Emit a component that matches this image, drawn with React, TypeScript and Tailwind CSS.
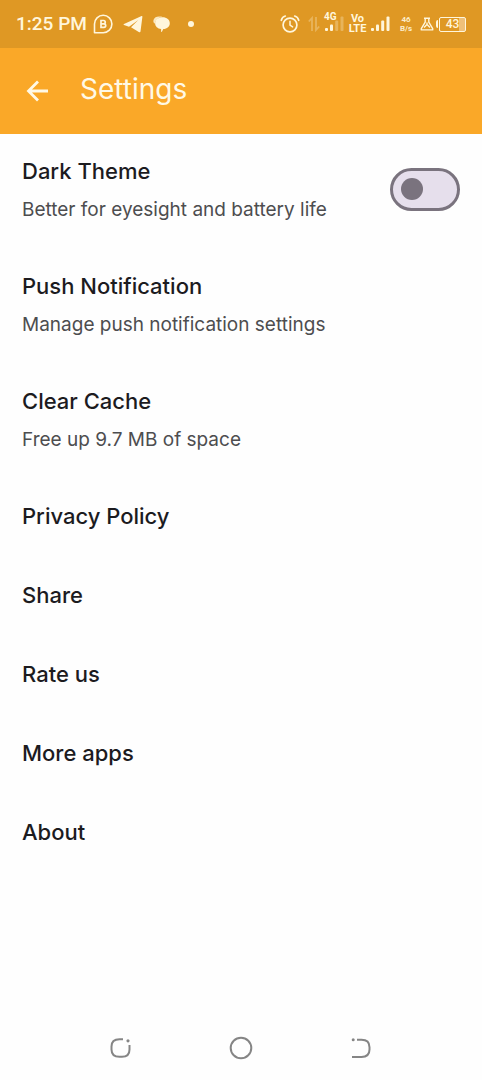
import React, { useState } from "react";
import clsx from "clsx";

type SettingProps = {
  title: string;
  subtitle?: string;
};

const settings: SettingProps[] = [
  { title: "Push Notification", subtitle: "Manage push notification settings" },
  { title: "Clear Cache", subtitle: "Free up 9.7 MB of space" },
  { title: "Privacy Policy" },
  { title: "Share" },
  { title: "Rate us" },
  { title: "More apps" },
  { title: "About" },
];

const SettingText: React.FC<SettingProps> = ({ title, subtitle }) => (
  <>
    <span className="block text-[22px] leading-[34px] font-medium text-[#1c1b1f]">
      {title}
    </span>
    {subtitle && (
      <span className="mt-2 block text-[19px] leading-7 text-[#4d4d4f]">
        {subtitle}
      </span>
    )}
  </>
);

const SignalBars: React.FC<{ className?: string; faded?: boolean }> = ({
  className,
  faded,
}) => (
  <svg
    viewBox="0 0 20 16"
    fill="currentColor"
    className={clsx("h-4 w-5", className)}
    aria-hidden="true"
  >
    <rect x="1" y="12" width="3" height="3" rx="1" />
    <rect x="6" y="8.5" width="3" height="6.5" rx="1" />
    <rect x="11.2" y="4.5" width="3" height="10.5" rx="1" opacity={faded ? 0.3 : 1} />
    <rect x="16.5" y="0.5" width="3" height="14.5" rx="1" opacity={faded ? 0.3 : 1} />
  </svg>
);

const StatusBar: React.FC = () => (
  <div className="flex h-12 items-center justify-between bg-[#df9824] px-4 font-['Roboto',sans-serif] text-[#fff6dc]">
    <div className="flex items-center">
      <span className="text-[19px] leading-6 font-medium">1:25 PM</span>
      <svg viewBox="0 0 20 20" className="ml-1.5 size-5" fill="none" stroke="currentColor" aria-hidden="true">
        <path d="M1.500 18.700V10a8.700 8.700 0 1 1 8.700 8.700z" strokeWidth="1.600" strokeLinejoin="round" />
        <path d="M8 6.500h2.600a1.600 1.600 0 0 1 0 3.300H8zM8 9.800h2.900a1.800 1.800 0 0 1 0 3.600H8z" strokeWidth="1.700" />
      </svg>
      <svg viewBox="0 0 20 18" className="ml-2.5 h-[18px] w-5" fill="currentColor" aria-hidden="true">
        <path d="M18.600 1 1 9c-.6.300-.6.800 0 1l5 1.700L15.300 5 8 12.300l8.200 4.900c.6.300 1.200.1 1.300-.6L19.400 1.700c.1-.6-.3-.9-.8-.7z" />
      </svg>
      <svg viewBox="0 0 18 18" className="ml-2.5 size-[18px]" fill="currentColor" aria-hidden="true">
        <path d="M1.600 8.800C.2 7.500.2 5.800.6 4.700 1.200 2.600 3.400 1.400 6 1.400h3.500C6 2.200 2.600 4.600 1.600 8.800z" opacity=".85" />
        <path d="M9.500 2.200c4.300 0 7.300 2.500 7.300 6 0 3.200-2.700 5.500-6.500 5.900l-1.400 2.700c-.3.300-.8.200-.8-.3V14c-3.500-.4-6-2.700-6-5.800 0-3.500 3.100-6 7.400-6z" />
      </svg>
      <span className="ml-[17px] size-[6px] rounded-full bg-current" />
    </div>

    <div className="flex items-center">
      <svg viewBox="0 0 20 20" className="size-5" fill="none" stroke="currentColor" strokeLinecap="round" aria-hidden="true">
        <circle cx="10" cy="11" r="6.900" strokeWidth="1.700" />
        <path d="M10 7.200v4l2.600 1.700" strokeWidth="1.500" />
        <path d="M1.300 6.300C1.800 4 3.300 2.600 5.300 2M18.700 6.300C18.200 4 16.700 2.600 14.700 2" strokeWidth="1.700" />
      </svg>
      <svg viewBox="0 0 12 18" className="ml-2 h-[18px] w-3 opacity-30" fill="none" stroke="currentColor" strokeWidth="1.800" aria-hidden="true">
        <path d="M4 16V3L.8 6.500M8 2v13l3.200-3.500" />
      </svg>
      <div className="relative ml-1 h-6 w-5">
        <span className="absolute top-0 left-0 text-[10px] leading-[10px] font-bold">4G</span>
        <SignalBars className="mt-1" faded />
      </div>
      <span className="ml-1 w-[19px] text-center text-[11px] leading-[10px] font-bold">
        Vo LTE
      </span>
      <SignalBars className="ml-[3px]" />
      <span className="ml-2 w-4 text-center text-[8px] leading-[9px] font-bold opacity-90">
        46 B/s
      </span>
      <svg viewBox="0 0 14 14" className="ml-1.5 size-3.5" fill="none" stroke="currentColor" strokeWidth="1.400" strokeLinejoin="round" aria-hidden="true">
        <path d="M4 1.200h6M5.200 1.200v4L1.300 11.600v1.300h11.400v-1.300L8.800 5.200v-4" />
        <path d="M4 10.500 7 7.500l3 3M7 5.500v2" />
      </svg>
      <div className="ml-0.5 flex items-center">
        <span className="h-2 w-[2px] rounded-l-sm bg-current" />
        <span className="ml-px flex h-[15px] w-[27px] items-center justify-center rounded-[2px] border border-current bg-linear-to-r from-transparent from-75% to-[#efc079] to-75% text-xs leading-[13px] font-medium">
          43
        </span>
      </div>
    </div>
  </div>
);

const NavBar: React.FC = () => (
  <nav className="mt-auto flex h-16 items-center justify-center gap-24 text-[#858585]">
    <button type="button" aria-label="Recent apps" className="size-6">
      <svg viewBox="0 0 24 24" fill="none" stroke="currentColor" strokeWidth="2">
        <path d="M14 3.200h-3.500C5 3.200 2.500 5.500 2.500 10.500v3c0 5 2.500 7.300 8 7.300h2.500c5.500 0 7.500-2.300 7.500-7.300V9" />
        <circle cx="19" cy="4.800" r="1.600" fill="currentColor" stroke="none" />
      </svg>
    </button>
    <button type="button" aria-label="Home" className="size-6">
      <svg viewBox="0 0 24 24" fill="none" stroke="currentColor" strokeWidth="2">
        <circle cx="12" cy="12" r="10.300" />
      </svg>
    </button>
    <button type="button" aria-label="Back" className="size-6">
      <svg viewBox="0 0 24 24" fill="none" stroke="currentColor" strokeWidth="2">
        <path d="M8 3.800h4.500c5.500 0 8 2.400 8 7.400v2.400c0 5-2.500 7.400-8 7.400H3" />
        <circle cx="4.200" cy="3.800" r="1.500" fill="currentColor" stroke="none" />
      </svg>
    </button>
  </nav>
);

const App: React.FC = () => {
  const [dark, setDark] = useState(false);

  return (
    <div className="flex min-h-screen flex-col bg-[#fefefe] font-['Inter',sans-serif]">
      <StatusBar />

      <header className="flex h-[86px] items-center bg-[#faa828] px-6 pb-1 text-[#fff9e6]">
        <button type="button" aria-label="Back" className="mt-1 mr-[30px]">
          <svg viewBox="0 0 26 26" className="size-[26px]" fill="none" stroke="currentColor" strokeWidth="2.800" aria-hidden="true">
            <path d="M24 13H4.500M14 3.500 4.500 13l9.500 9.500" />
          </svg>
        </button>
        <h1 className="text-[28px] leading-10 font-normal">Settings</h1>
      </header>

      <main className="flex flex-col gap-[45px] px-[22px] pt-5">
        <label className="flex cursor-pointer items-center justify-between">
          <span>
            <SettingText
              title="Dark Theme"
              subtitle="Better for eyesight and battery life"
            />
          </span>
          <input
            type="checkbox"
            role="switch"
            checked={dark}
            onChange={(e) => setDark(e.target.checked)}
            className={clsx(
              "flex h-[43px] w-[70px] shrink-0 cursor-pointer appearance-none items-center rounded-full border-3 border-[#7a737e] bg-[#e6dfec] px-2",
              "before:size-[22px] before:rounded-full before:bg-[#7a737e]",
              "checked:justify-end"
            )}
          />
        </label>

        {settings.map((item) => (
          <button key={item.title} type="button" className="text-left">
            <SettingText {...item} />
          </button>
        ))}
      </main>

      <NavBar />
    </div>
  );
};

export default App;
